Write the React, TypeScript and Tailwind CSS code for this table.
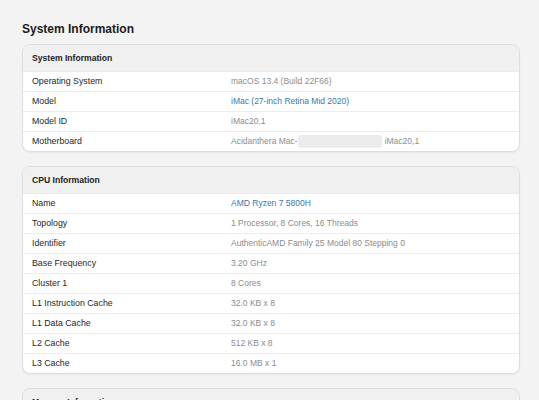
import React from "react";

type Row = { label: string; value: React.ReactNode; link?: boolean };

const sys: Row[] = [
  { label: "Operating System", value: "macOS 13.4 (Build 22F66)" },
  { label: "Model", value: "iMac (27-inch Retina Mid 2020)", link: true },
  { label: "Model ID", value: "iMac20,1" },
  {
    label: "Motherboard",
    value: (
      <span className="flex items-center">
        <span>Acidanthera Mac-</span>
        <span className="inline-block w-[84px] h-[13px] rounded-[3px] bg-[#ececec]" />
        <span className="ml-[3px]">iMac20,1</span>
      </span>
    ),
  },
];

const cpu: Row[] = [
  { label: "Name", value: "AMD Ryzen 7 5800H", link: true },
  { label: "Topology", value: "1 Processor, 8 Cores, 16 Threads" },
  { label: "Identifier", value: "AuthenticAMD Family 25 Model 80 Stepping 0" },
  { label: "Base Frequency", value: "3.20 GHz" },
  { label: "Cluster 1", value: "8 Cores" },
  { label: "L1 Instruction Cache", value: "32.0 KB x 8" },
  { label: "L1 Data Cache", value: "32.0 KB x 8" },
  { label: "L2 Cache", value: "512 KB x 8" },
  { label: "L3 Cache", value: "16.0 MB x 1" },
];

function Card({ title, rows }: { title: string; rows: Row[] }) {
  return (
    <div className="border border-[#dedede] rounded-[8px] bg-white overflow-hidden shadow-[0_1px_2px_rgba(0,0,0,0.05)]">
      <div className="h-[26px] bg-[#f0f0f0] flex items-center pl-[9px] text-[8.6px] font-bold text-[#222]">
        {title}
      </div>
      {rows.map((r, i) => (
        <div
          key={i}
          className="h-[20px] border-t border-[#ececec] grid grid-cols-[208px_1fr] items-center"
        >
          <div className="pl-[9px] text-[8.8px] text-[#262626]">{r.label}</div>
          <div
            className={
              "text-[8.5px] " + (r.link ? "text-[#3479ad]" : "text-[#8c8c8c]")
            }
          >
            {r.value}
          </div>
        </div>
      ))}
    </div>
  );
}

export default function App() {
  return (
    <div
      className="w-[539px] h-[400px] overflow-hidden bg-[#f3f3f3] pl-[22px] pr-[19px] pt-[20px]"
      style={{ fontFamily: '"Liberation Sans", Arial, Helvetica, sans-serif' }}
    >
      <h1 className="text-[12px] leading-[18px] font-bold text-[#1c1c1c] mb-[6px]">
        System Information
      </h1>
      <div className="flex flex-col gap-[14px]">
        <Card title="System Information" rows={sys} />
        <Card title="CPU Information" rows={cpu} />
        <div className="border border-[#dedede] rounded-[8px] bg-white overflow-hidden">
          <div className="h-[26px] bg-[#f0f0f0] flex items-center pl-[9px] text-[8.6px] font-bold text-[#222]">
            Memory Information
          </div>
        </div>
      </div>
    </div>
  );
}
